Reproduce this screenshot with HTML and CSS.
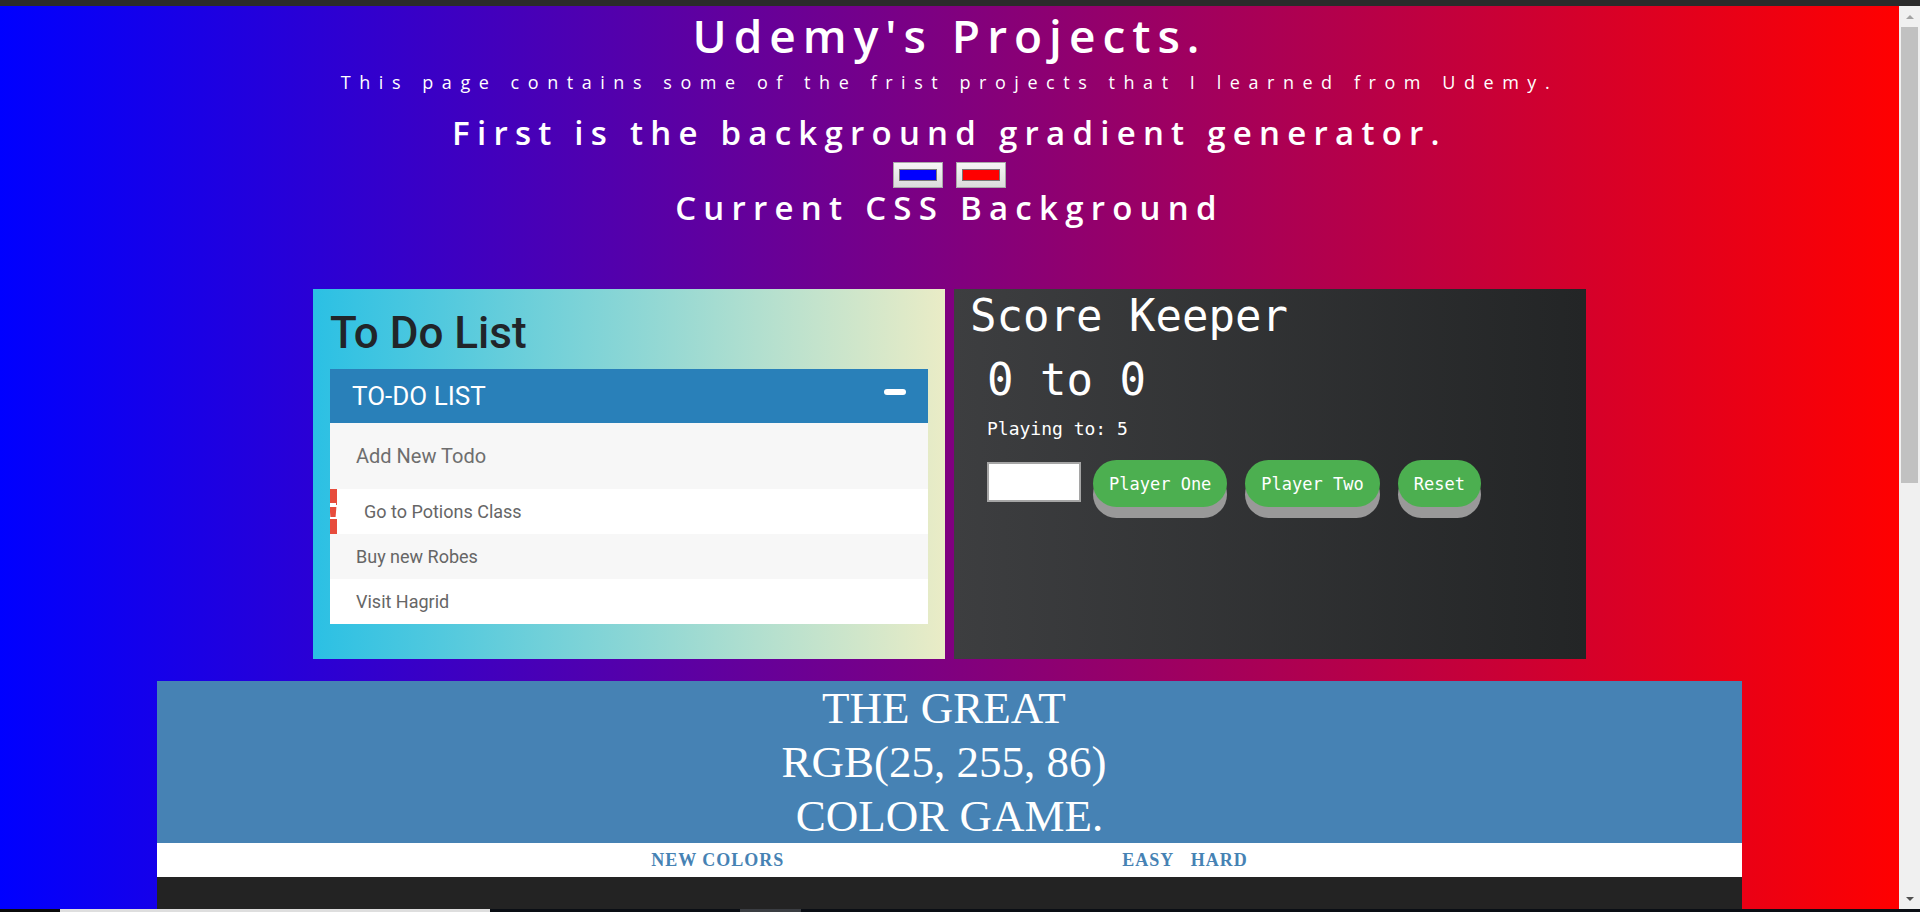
FILE: index.html
```html
<!DOCTYPE html>
<html lang="en">
<head>
<meta charset="utf-8">
<title>Udemy's Projects</title>
<link rel="stylesheet" href="styles.css">
</head>
<body>
<div class="topbar"></div>
<div class="viewport">
  <main class="page">
    <header class="intro">
      <h1 class="intro-title">Udemy's Projects.</h1>
      <p class="intro-sub">This page contains some of the frist projects that I learned from Udemy.</p>
      <h3 class="intro-head">First is the background gradient generator.</h3>
      <div class="pickers">
        <input type="color" class="picker" value="#0000ff">
        <input type="color" class="picker" value="#ff0000">
      </div>
      <h3 class="intro-head current">Current CSS Background</h3>
    </header>

    <section class="cards">
      <div class="card todo-card">
        <h1 class="todo-title">To Do List</h1>
        <div class="todo-panel">
          <div class="todo-head">
            <span class="todo-head-text">TO-DO LIST</span>
            <span class="minus"></span>
          </div>
          <input type="text" class="todo-input" placeholder="Add New Todo">
          <ul class="todo-list">
            <li class="todo-item"><span class="del del-open"><svg class="trash" width="14" height="16" viewBox="0 0 14 16"><path d="M1 3h12M5 3V1h4v2M2.5 3l1 12h7l1-12" fill="none" stroke="#fff" stroke-width="2"/></svg></span>Go to Potions Class</li>
            <li class="todo-item"><span class="del"></span>Buy new Robes</li>
            <li class="todo-item"><span class="del"></span>Visit Hagrid</li>
          </ul>
        </div>
      </div>

      <div class="card score-card">
        <h1 class="score-title">Score Keeper</h1>
        <div class="score-body">
          <h2 class="score-value">0 to 0</h2>
          <p class="score-target">Playing to: 5</p>
          <div class="score-controls">
            <input type="number" class="score-input">
            <button class="score-btn">Player One</button>
            <button class="score-btn">Player Two</button>
            <button class="score-btn">Reset</button>
          </div>
        </div>
      </div>
    </section>

    <section class="color-game">
      <h1 class="cg-title">The Great&nbsp;<br>RGB(25, 255, 86)&nbsp;<br>Color Game.</h1>
      <div class="cg-stripe">
        <button class="cg-btn">New Colors</button>
        <span class="cg-message"></span>
        <button class="cg-btn">Easy</button>
        <button class="cg-btn">Hard</button>
      </div>
      <div class="cg-board"></div>
    </section>
  </main>

  <div class="scrollbar">
    <div class="sb-arrow"><span class="tri-up"></span></div>
    <div class="sb-thumb"></div>
    <div class="sb-track"></div>
    <div class="sb-arrow"><span class="tri-down"></span></div>
  </div>
</div>
<div class="taskbar">
  <span class="tb tb-a"></span>
  <span class="tb tb-b"></span>
  <span class="tb tb-c"></span>
  <span class="tb tb-d"></span>
  <span class="tb tb-e"></span>
</div>
</body>
</html>
```

FILE: styles.css
```css
html, body {
  margin: 0;
  padding: 0;
  height: 912px;
  overflow: hidden;
}

body {
  display: flex;
  flex-direction: column;
  font-family: "Open Sans", "Liberation Sans", sans-serif;
}

.topbar {
  height: 6px;
  background: #2b2b2b;
  flex: none;
}

.viewport {
  display: flex;
  height: 903px;
  flex: none;
}

.page {
  flex: 1;
  min-width: 0;
  overflow: hidden;
  background: linear-gradient(to right, #0000ff, #ff0000);
}

/* ---------- intro ---------- */
.intro {
  text-align: center;
  color: #fff;
}

.intro-title {
  margin: 0;
  padding-top: 1px;
  font-size: 46px;
  line-height: 56px;
  font-weight: 600;
  letter-spacing: 7px;
}

.intro-sub {
  margin: 7px 0 0;
  font-size: 18px;
  line-height: 24px;
  font-weight: 400;
  letter-spacing: 8.55px;
}

.intro-head {
  margin: 19px 0 0;
  font-size: 33px;
  line-height: 40px;
  font-weight: 600;
  letter-spacing: 7.25px;
}

.intro-head.current {
  margin: 2px 0 0;
  line-height: 36px;
}

.pickers {
  display: flex;
  justify-content: center;
  gap: 13px;
  margin-top: 9px;
}

.picker {
  -webkit-appearance: none;
  appearance: none;
  width: 50px;
  height: 26px;
  padding: 0;
  margin: 0;
  border: 1px solid #a9a9a9;
  border-radius: 0;
  background: linear-gradient(#f6f6f6, #dcdcdc);
  box-sizing: border-box;
}

.picker::-webkit-color-swatch-wrapper {
  padding: 6px 5px;
}

.picker::-webkit-color-swatch {
  border: 1px solid #777;
  border-radius: 0;
}

/* ---------- cards ---------- */
.cards {
  display: flex;
  justify-content: center;
  gap: 9px;
  margin-top: 63px;
}

.card {
  width: 632px;
  height: 370px;
  box-sizing: border-box;
  flex: none;
}

.todo-card {
  background: linear-gradient(to right, #2bc0e4, #eaecc6);
  padding: 18px 17px;
  font-family: Roboto, "Liberation Sans", sans-serif;
}

.todo-title {
  margin: 0 0 9px;
  font-size: 44px;
  line-height: 52.8px;
  font-weight: 500;
  color: #212529;
}

.todo-panel {
  background: #fff;
}

.todo-head {
  display: flex;
  justify-content: space-between;
  align-items: flex-start;
  height: 54px;
  padding: 0 22px 0 22px;
  background: #2980b9;
  color: #fff;
}

.todo-head-text {
  font-size: 26px;
  line-height: 54px;
  font-weight: 400;
}

.minus {
  width: 22px;
  height: 6px;
  margin-top: 20px;
  background: #fff;
  border-radius: 3px;
}

.todo-input {
  display: block;
  width: 100%;
  height: 66px;
  margin: 0;
  padding: 0 0 0 26px;
  box-sizing: border-box;
  border: 0;
  outline: none;
  background: #f7f7f7;
  font-family: Roboto, "Liberation Sans", sans-serif;
  font-size: 20px;
  color: #2980b9;
}

.todo-input::placeholder {
  color: #6e6e6e;
}

.todo-list {
  list-style: none;
  margin: 0;
  padding: 0;
}

.todo-item {
  display: flex;
  align-items: stretch;
  height: 45px;
  line-height: 45px;
  font-size: 18px;
  color: #666;
  background: #fff;
}

.todo-item:nth-child(2n) {
  background: #f7f7f7;
}

.del {
  width: 0;
  margin-right: 26px;
  background: #e74c3c;
  overflow: hidden;
  display: flex;
  align-items: center;
}

.del-open {
  width: 7px;
  margin-right: 27px;
}

.trash {
  flex: none;
  margin-left: -4px;
}

/* ---------- score keeper ---------- */
.score-card {
  background: linear-gradient(to right, #3d3e40, #232526);
  padding: 1px 16px 0;
  color: #fff;
  font-family: "DejaVu Sans Mono", "Liberation Mono", monospace;
}

.score-title {
  margin: 0;
  font-size: 44px;
  line-height: 52px;
  font-weight: 400;
}

.score-body {
  margin-left: 17px;
}

.score-value {
  margin: 12px 0 0;
  font-size: 44px;
  line-height: 52px;
  font-weight: 400;
}

.score-target {
  margin: 12px 0 0;
  font-size: 18px;
  line-height: 22px;
}

.score-controls {
  display: flex;
  align-items: flex-start;
  gap: 18px;
  margin-top: 20px;
}

.score-input {
  width: 94px;
  height: 40px;
  margin: 2px -6px 0 0;
  box-sizing: border-box;
  border: 2px solid #a5a5a5;
  background: #fff;
  padding: 0 4px;
}

.score-btn {
  height: 47px;
  padding: 0 16px;
  border: 0;
  border-radius: 24px;
  background: #4caf50;
  color: #fff;
  font-family: "DejaVu Sans Mono", "Liberation Mono", monospace;
  font-size: 17px;
  box-shadow: 0 11px 0 #999;
}

/* ---------- color game ---------- */
.color-game {
  width: 1585px;
  margin: 22px auto 0;
  font-family: "Liberation Serif", "Times New Roman", serif;
}

.cg-title {
  margin: 0;
  background: #4682b4;
  color: #fff;
  text-align: center;
  text-transform: uppercase;
  font-weight: 400;
  font-size: 45px;
  line-height: 54px;
}

.cg-stripe {
  height: 34px;
  background: #fff;
  text-align: center;
  font-size: 18px;
}

.cg-btn {
  height: 100%;
  padding: 0 6px;
  margin: 0;
  border: 0;
  background: none;
  font-family: "Liberation Serif", "Times New Roman", serif;
  font-size: 18px;
  font-weight: 700;
  letter-spacing: 1px;
  text-transform: uppercase;
  color: #4682b4;
  vertical-align: top;
}

.cg-message {
  display: inline-block;
  width: 20%;
}

.cg-board {
  height: 300px;
  background: #232323;
}

/* ---------- fake scrollbar ---------- */
.scrollbar {
  width: 21px;
  flex: none;
  display: flex;
  flex-direction: column;
  background: #f0f0f0;
}

.sb-arrow {
  height: 21px;
  display: flex;
  align-items: center;
  justify-content: center;
  flex: none;
}

.tri-up {
  width: 0;
  height: 0;
  border-left: 4px solid transparent;
  border-right: 4px solid transparent;
  border-bottom: 4px solid #a3a3a3;
}

.tri-down {
  width: 0;
  height: 0;
  border-left: 4px solid transparent;
  border-right: 4px solid transparent;
  border-top: 4px solid #505050;
}

.sb-thumb {
  height: 456px;
  margin: 0 2px;
  background: #c1c1c1;
  flex: none;
}

.sb-track {
  flex: 1;
}

/* ---------- bottom strip ---------- */
.taskbar {
  height: 3px;
  display: flex;
  flex: none;
}

.tb { display: block; height: 3px; }
.tb-a { width: 60px; background: #0b0b0b; }
.tb-b { width: 430px; background: #dedede; }
.tb-c { width: 250px; background: #0a0e14; }
.tb-d { width: 61px; background: #3a3d42; }
.tb-e { flex: 1; background: #0a0e14; }
```
